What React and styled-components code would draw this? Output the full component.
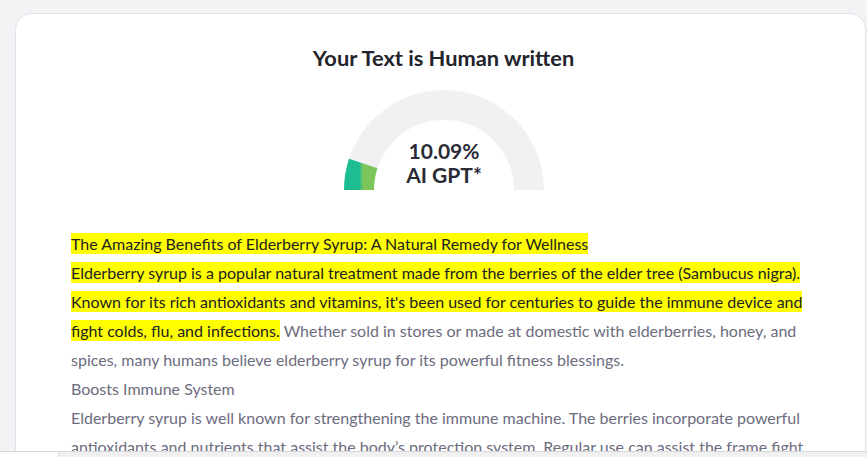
import React from "react";
import styled, { createGlobalStyle } from "styled-components";

const GlobalStyle = createGlobalStyle`
  html, body {
    margin: 0;
    padding: 0;
    background: #f3f3f6;
    overflow: hidden;
  }
  body {
    font-family: Lato, "Open Sans", sans-serif;
  }
`;

const Page = styled.div`
  height: 457px;
  padding: 13px 0 0 15px;
  box-sizing: border-box;
  overflow: hidden;
`;

const Card = styled.div`
  background: #fff;
  border: 1px solid #e3e3ec;
  border-radius: 16px;
  width: 851px;
  min-height: 500px;
  box-sizing: border-box;
  padding: 31px 0 0 55px;
  display: flex;
  flex-direction: column;
`;

const Title = styled.h2`
  margin: 0;
  text-align: center;
  font-size: 21.8px;
  line-height: 26px;
  font-weight: 700;
  color: #23232c;
  width: 745px;
`;

const GaugeWrap = styled.div`
  position: relative;
  width: 202px;
  height: 101px;
  margin: 18px 0 0 272px;
`;

const GaugeLabel = styled.div`
  position: absolute;
  left: 0;
  right: 0;
  top: 50px;
  text-align: center;
  font-size: 21px;
  line-height: 24px;
  font-weight: 700;
  color: #2b2b36;
`;

const Body = styled.div`
  width: 734px;
  margin-top: 39px;
  font-size: 16px;
  line-height: 29px;
  color: #6c6c7e;
`;

const Line = styled.p`
  margin: 0;
`;

const Mark = styled.span`
  background: #ffff00;
  color: #222;
  padding: 1px 0;
`;

const BottomStrip = styled.div`
  position: fixed;
  left: 0;
  right: 0;
  bottom: 0;
  height: 5px;
  background: #f0f0f0;
  border-top: 1px solid #d6d6d6;
  display: flex;
`;

const StripTab = styled.div`
  width: 58px;
  background: #fff;
  border-right: 1px solid #d6d6d6;
`;

const Gauge = ({ value }) => {
  const cx = 101;
  const cy = 101;
  const r = 85;
  const a = (Math.PI * value) / 100;
  const x = cx - r * Math.cos(a);
  const y = cy - r * Math.sin(a);
  return (
    <svg width="202" height="101" viewBox="0 0 202 101">
      <defs>
        <linearGradient id="g" x1="0" y1="0" x2="1" y2="0">
          <stop offset="0%" stopColor="#1dbd92" />
          <stop offset="100%" stopColor="#7cc55a" />
        </linearGradient>
      </defs>
      <path
        d={`M ${cx - r} ${cy} A ${r} ${r} 0 0 1 ${cx + r} ${cy}`}
        fill="none"
        stroke="#f1f1f1"
        strokeWidth="30"
      />
      <path
        d={`M ${cx - r} ${cy} A ${r} ${r} 0 0 1 ${x} ${y}`}
        fill="none"
        stroke="url(#g)"
        strokeWidth="30"
      />
    </svg>
  );
};

export default function App() {
  return (
    <>
      <GlobalStyle />
      <Page>
        <Card>
          <Title>Your Text is Human written</Title>
          <GaugeWrap>
            <Gauge value={10.09} />
            <GaugeLabel>
              10.09%
              <br />
              AI GPT*
            </GaugeLabel>
          </GaugeWrap>
          <Body>
            <Line>
              <Mark>
                The Amazing Benefits of Elderberry Syrup: A Natural Remedy for
                Wellness
              </Mark>
            </Line>
            <Line>
              <Mark>
                Elderberry syrup is a popular natural treatment made from the
                berries of the elder tree (Sambucus nigra). Known for its rich
                antioxidants and vitamins, it's been used for centuries to guide
                the immune device and fight colds, flu, and infections.
              </Mark>{" "}
              Whether sold in stores or made at domestic with elderberries,
              honey, and spices, many humans believe elderberry syrup for its
              powerful fitness blessings.
            </Line>
            <Line>Boosts Immune System</Line>
            <Line>
              Elderberry syrup is well known for strengthening the immune
              machine. The berries incorporate powerful antioxidants and
              nutrients that assist the body’s protection system. Regular use
              can assist the frame fight off infections extra efficiently.
            </Line>
          </Body>
        </Card>
      </Page>
      <BottomStrip>
        <StripTab />
      </BottomStrip>
    </>
  );
}
